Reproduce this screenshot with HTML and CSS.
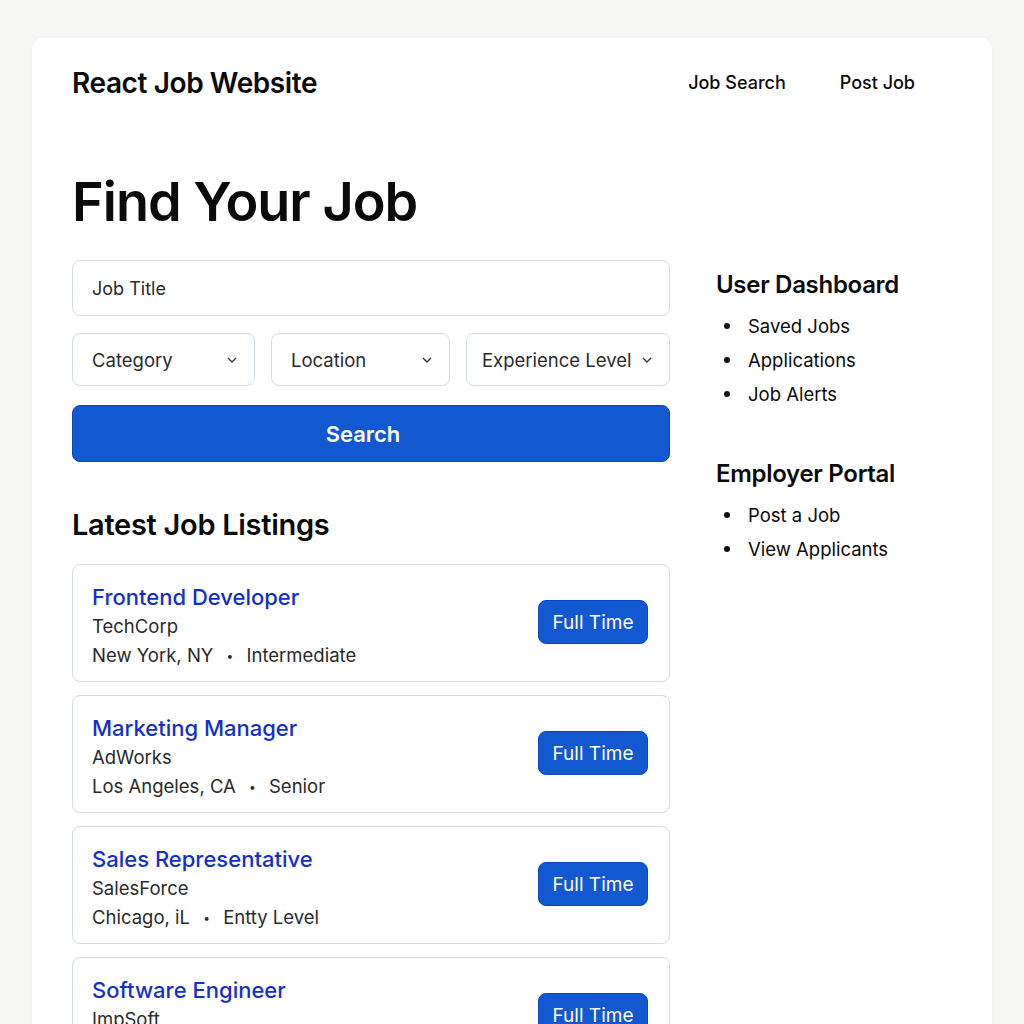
FILE: index.html
```html
<!DOCTYPE html>
<html lang="en">
<head>
<meta charset="utf-8">
<title>React Job Website</title>
<link rel="stylesheet" href="styles.css">
</head>
<body>
<div class="page">
  <header class="header">
    <div class="brand">React Job Website</div>
    <nav class="nav">
      <a href="#">Job Search</a>
      <a href="#">Post Job</a>
    </nav>
  </header>

  <h1 class="hero">Find Your Job</h1>

  <div class="layout">
    <main class="main">
      <div class="field">Job Title</div>
      <div class="selects">
        <div class="select select-cat"><span>Category</span><svg class="chev" viewBox="0 0 10 6"><path d="M1 1l4 4 4-4"/></svg></div>
        <div class="select select-loc"><span>Location</span><svg class="chev" viewBox="0 0 10 6"><path d="M1 1l4 4 4-4"/></svg></div>
        <div class="select select-exp"><span>Experience Level</span><svg class="chev" viewBox="0 0 10 6"><path d="M1 1l4 4 4-4"/></svg></div>
      </div>
      <button class="search-btn">Search</button>

      <h2 class="section-title">Latest Job Listings</h2>

      <div class="jobs">
        <div class="job">
          <div class="job-info">
            <div class="job-title">Frontend Developer</div>
            <div class="job-company">TechCorp</div>
            <div class="job-meta">New York, NY <span class="dot">•</span> Intermediate</div>
          </div>
          <span class="badge">Full Time</span>
        </div>
        <div class="job">
          <div class="job-info">
            <div class="job-title">Marketing Manager</div>
            <div class="job-company">AdWorks</div>
            <div class="job-meta">Los Angeles, CA <span class="dot">•</span> Senior</div>
          </div>
          <span class="badge">Full Time</span>
        </div>
        <div class="job">
          <div class="job-info">
            <div class="job-title">Sales Representative</div>
            <div class="job-company">SalesForce</div>
            <div class="job-meta">Chicago, iL <span class="dot">•</span> Entty Level</div>
          </div>
          <span class="badge">Full Time</span>
        </div>
        <div class="job">
          <div class="job-info">
            <div class="job-title">Software Engineer</div>
            <div class="job-company">ImpSoft</div>
            <div class="job-meta">San Francisco, CA <span class="dot">•</span> Senior</div>
          </div>
          <span class="badge">Full Time</span>
        </div>
      </div>
    </main>

    <aside class="sidebar">
      <h3 class="side-title">User Dashboard</h3>
      <ul class="side-list">
        <li>Saved Jobs</li>
        <li>Applications</li>
        <li>Job Alerts</li>
      </ul>
      <h3 class="side-title side-title-2">Employer Portal</h3>
      <ul class="side-list">
        <li>Post a Job</li>
        <li>View Applicants</li>
      </ul>
    </aside>
  </div>
</div>
</body>
</html>
```
FILE: styles.css
```css
* { box-sizing: border-box; }

html, body {
  margin: 0;
  padding: 0;
  background: #f6f6f5;
  font-family: Inter, "Noto Sans", "Liberation Sans", sans-serif;
  color: #0a0a0a;
  height: 1024px;
  overflow: hidden;
}

body {
  padding: 38px 32px 0 32px;
}

.page {
  background: #fff;
  border-radius: 10px;
  min-height: 1100px;
  padding: 0 40px;
  box-shadow: 0 0 3px rgba(0,0,0,0.04);
}

.header {
  display: flex;
  justify-content: space-between;
  align-items: center;
  padding-top: 28px;
  height: 62px;
}

.brand {
  font-size: 28px;
  font-weight: 600;
  line-height: 34px;
  letter-spacing: -0.4px;
}

.nav {
  display: flex;
  gap: 54px;
  padding-right: 37px;
}

.nav a {
  color: #0a0a0a;
  text-decoration: none;
  font-size: 18px;
  font-weight: 500;
  line-height: 34px;
}

.hero {
  margin: 68px 0 0 0;
  font-size: 54px;
  line-height: 67px;
  font-weight: 600;
  letter-spacing: -1px;
}

.layout {
  display: grid;
  grid-template-columns: 598px 1fr;
  column-gap: 46px;
  margin-top: 25px;
}

.field {
  height: 56px;
  border: 1px solid #d3dce6;
  border-radius: 8px;
  display: flex;
  align-items: center;
  padding-left: 19px;
  font-size: 18px;
  color: #2a2a2a;
}

.selects {
  display: grid;
  grid-template-columns: 183fr 179fr 204fr;
  gap: 16px;
  margin-top: 17px;
}

.select {
  height: 53px;
  border: 1px solid #d3dce6;
  border-radius: 8px;
  display: flex;
  align-items: center;
  justify-content: space-between;
  padding: 0 17px 0 19px;
  font-size: 18.5px;
  color: #2a2a2a;
}

.select-exp {
  padding-left: 15px;
}

.chev {
  width: 10px;
  height: 6px;
  fill: none;
  stroke: #333;
  stroke-width: 1.3;
}

.search-btn {
  display: block;
  width: 100%;
  height: 57px;
  margin-top: 19px;
  padding: 0 16px 0 0;
  background: #1158d1;
  border: 1px solid #0b47b8;
  border-radius: 8px;
  color: #fff;
  font-family: Inter, "Noto Sans", sans-serif;
  font-size: 22px;
  font-weight: 600;
}

.section-title {
  margin: 46px 0 0 0;
  font-size: 29px;
  line-height: 34px;
  font-weight: 600;
  letter-spacing: -0.3px;
}

.jobs {
  display: flex;
  flex-direction: column;
  gap: 13px;
  margin-top: 22px;
}

.job {
  border: 1px solid #d3dce6;
  border-radius: 8px;
  padding: 17px 21px 11px 19px;
  display: flex;
  align-items: center;
  justify-content: space-between;
}

.job-title {
  font-size: 22px;
  line-height: 30px;
  font-weight: 500;
  color: #1530c8;
}

.job-company,
.job-meta {
  font-size: 18.5px;
  line-height: 29px;
  color: #2a2a2a;
}

.dot {
  font-size: 12px;
  margin: 0 8px;
  vertical-align: 2px;
}

.badge {
  width: 110px;
  height: 44px;
  display: flex;
  align-items: center;
  justify-content: center;
  background: #1158d1;
  border: 1px solid #0b47b8;
  border-radius: 8px;
  color: #fff;
  font-size: 19px;
  margin-top: -8px;
}

.sidebar {
  padding-top: 9px;
}

.side-title {
  margin: 0;
  font-size: 24px;
  line-height: 32px;
  font-weight: 600;
  letter-spacing: -0.3px;
}

.side-title-2 {
  margin-top: 47px;
}

.side-list {
  list-style: none;
  margin: 8px 0 0 0;
  padding: 0;
}

.side-list li {
  display: flex;
  align-items: center;
  font-size: 18.5px;
  line-height: 34px;
  color: #0a0a0a;
}

.side-list li::before {
  content: "";
  width: 6px;
  height: 6px;
  border-radius: 50%;
  background: #111;
  margin-left: 8px;
  margin-right: 18px;
}
```
